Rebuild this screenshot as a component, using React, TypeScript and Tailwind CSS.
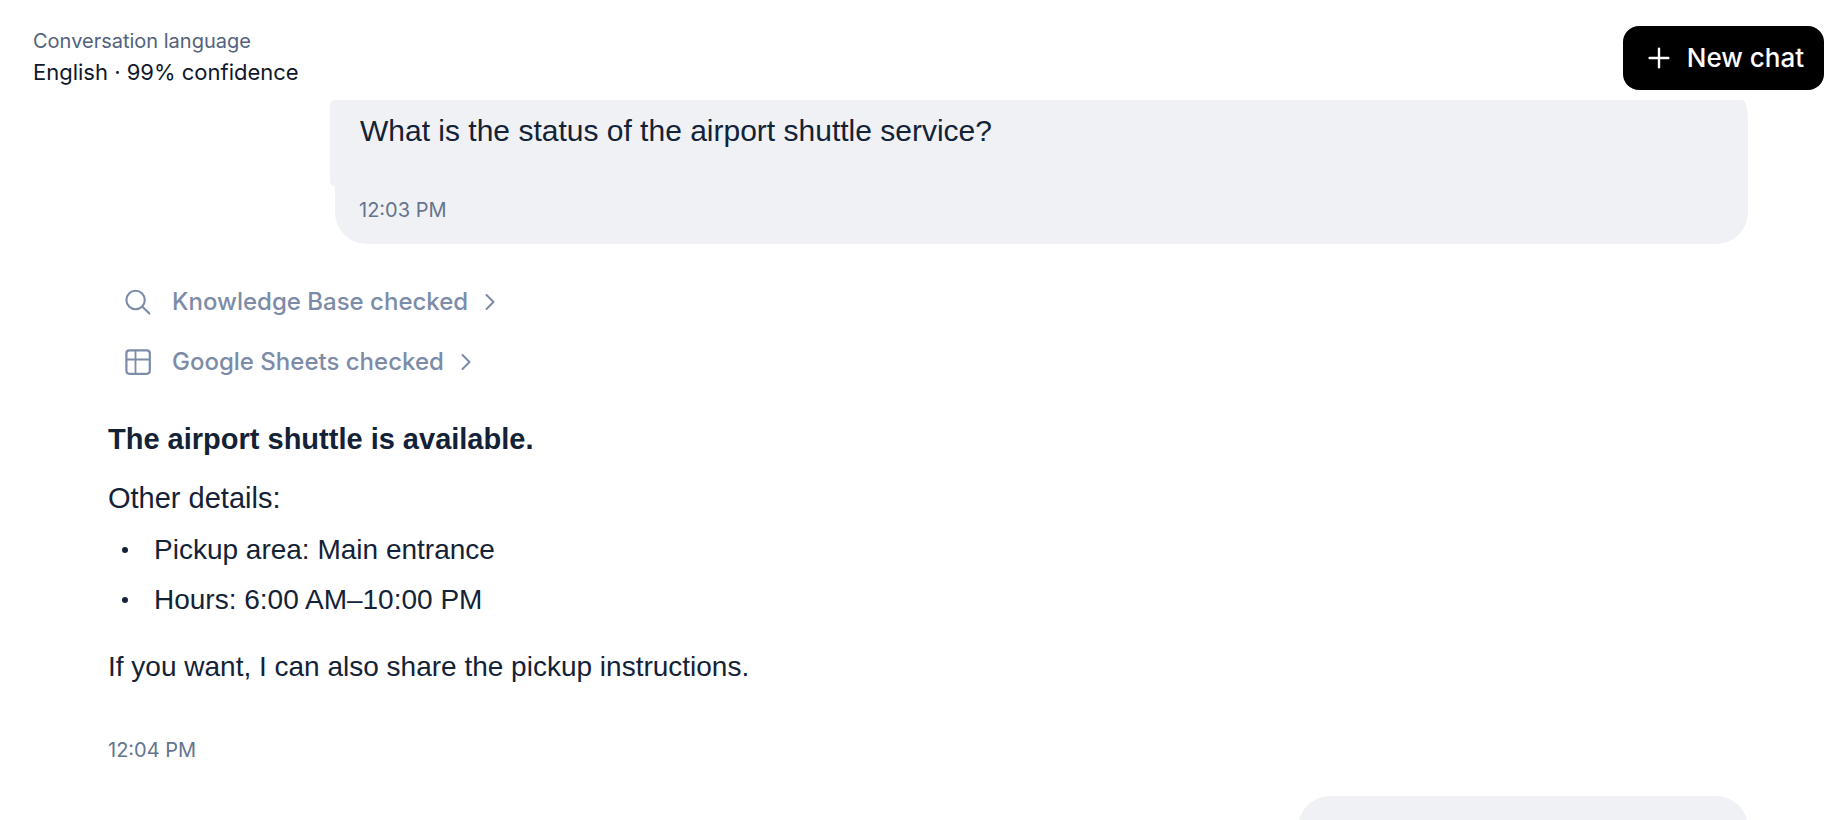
import { ChevronRight, Plus } from 'lucide-react';

const SearchIcon = () => (
  <svg
    viewBox="0 0 28 28"
    className="w-7 h-7 flex-shrink-0"
    fill="none"
    stroke="currentColor"
    strokeWidth="2.1"
    strokeLinecap="round"
    aria-hidden="true"
  >
    <circle cx="11.6" cy="12" r="9.2" />
    <path d="M18.4 18.8l7 6.8" />
  </svg>
);

const TableIcon = () => (
  <svg
    viewBox="0 0 28 28"
    className="w-7 h-7 flex-shrink-0"
    fill="none"
    stroke="currentColor"
    aria-hidden="true"
  >
    <rect x="2.4" y="2.4" width="23.4" height="23.4" rx="3" strokeWidth="2.2" />
    <path d="M2.4 11.5h23.4M11.5 2.4v23.4" strokeWidth="1.8" />
  </svg>
);

const steps = [
  {
    id: 1,
    label: 'Knowledge Base checked',
    icon: <SearchIcon />,
  },
  {
    id: 2,
    label: 'Google Sheets checked',
    icon: <TableIcon />,
  },
];

const details = ['Pickup area: Main entrance', 'Hours: 6:00 AM–10:00 PM'];

const Header = () => {
  return (
    <header className="h-[100px] flex-shrink-0 flex justify-between items-start pl-[33px] pr-[21px] pt-[26px]">
      <div>
        <p className="text-[20px] leading-[30px] text-[#52627d]">Conversation language</p>
        <p className="text-[22px] leading-[32px] text-[#0f172a]">English · 99% confidence</p>
      </div>
      <button
        type="button"
        className="h-16 flex items-center gap-3 rounded-2xl bg-black px-5 text-[26px] leading-[32px] font-medium text-white"
      >
        <Plus className="w-8 h-8" strokeWidth={1.8} />
        New chat
      </button>
    </header>
  );
};

const Question = () => {
  return (
    <div className="ml-[227px] rounded-b-[32px] rounded-tr-[7px_18px] bg-[#f0f1f5] pb-[18px]">
      <div className="-ml-[5px] mr-[2px] h-[86px] rounded-[5px] bg-[#f0f1f5] pl-[30px] pt-[13px]">
        <p className="font-['Liberation_Sans',sans-serif] text-[30px] leading-[36px] text-[#132236]">
          What is the status of the airport shuttle service?
        </p>
      </div>
      <p className="pl-6 pt-2 text-[20px] leading-[32px] text-[#64748f]">12:03 PM</p>
    </div>
  );
};

const Answer = () => {
  return (
    <div className="pt-10">
      <div className="flex flex-col items-start gap-6 pl-4">
        {steps.map((step) => (
          <button
            key={step.id}
            type="button"
            className="flex items-center text-[24px] leading-[36px] font-medium text-[#7c8ca8]"
          >
            {step.icon}
            <span className="ml-5">{step.label}</span>
            <ChevronRight className="ml-2 w-7 h-7" strokeWidth={1.8} />
          </button>
        ))}
      </div>
      <div className="pt-[41px] font-['Liberation_Sans',sans-serif] text-[29px] leading-[36px] text-[#132236]">
        <p className="font-bold">The airport shuttle is available.</p>
        <p className="mt-[23px]">Other details:</p>
        <ul className="mt-4 flex flex-col gap-[14px] text-[28px]">
          {details.map((detail) => (
            <li key={detail} className="flex items-center pl-[14px]">
              <span className="w-[6px] h-[6px] rounded-full bg-[#132236]" />
              <span className="ml-[26px]">{detail}</span>
            </li>
          ))}
        </ul>
        <p className="mt-[31px] text-[28px]">
          If you want, I can also share the pickup instructions.
        </p>
      </div>
      <p className="mt-[49px] text-[20px] leading-[32px] text-[#64748f]">12:04 PM</p>
    </div>
  );
};

export default function App() {
  return (
    <div className="h-screen flex flex-col overflow-hidden bg-white font-[Inter,sans-serif]">
      <Header />
      <main className="flex-1 min-h-0 overflow-hidden pl-[108px] pr-[97px]">
        <Question />
        <Answer />
        <div className="mt-[30px] ml-auto h-36 w-[450px] rounded-[32px] bg-[#f0f1f5]" />
      </main>
    </div>
  );
}
